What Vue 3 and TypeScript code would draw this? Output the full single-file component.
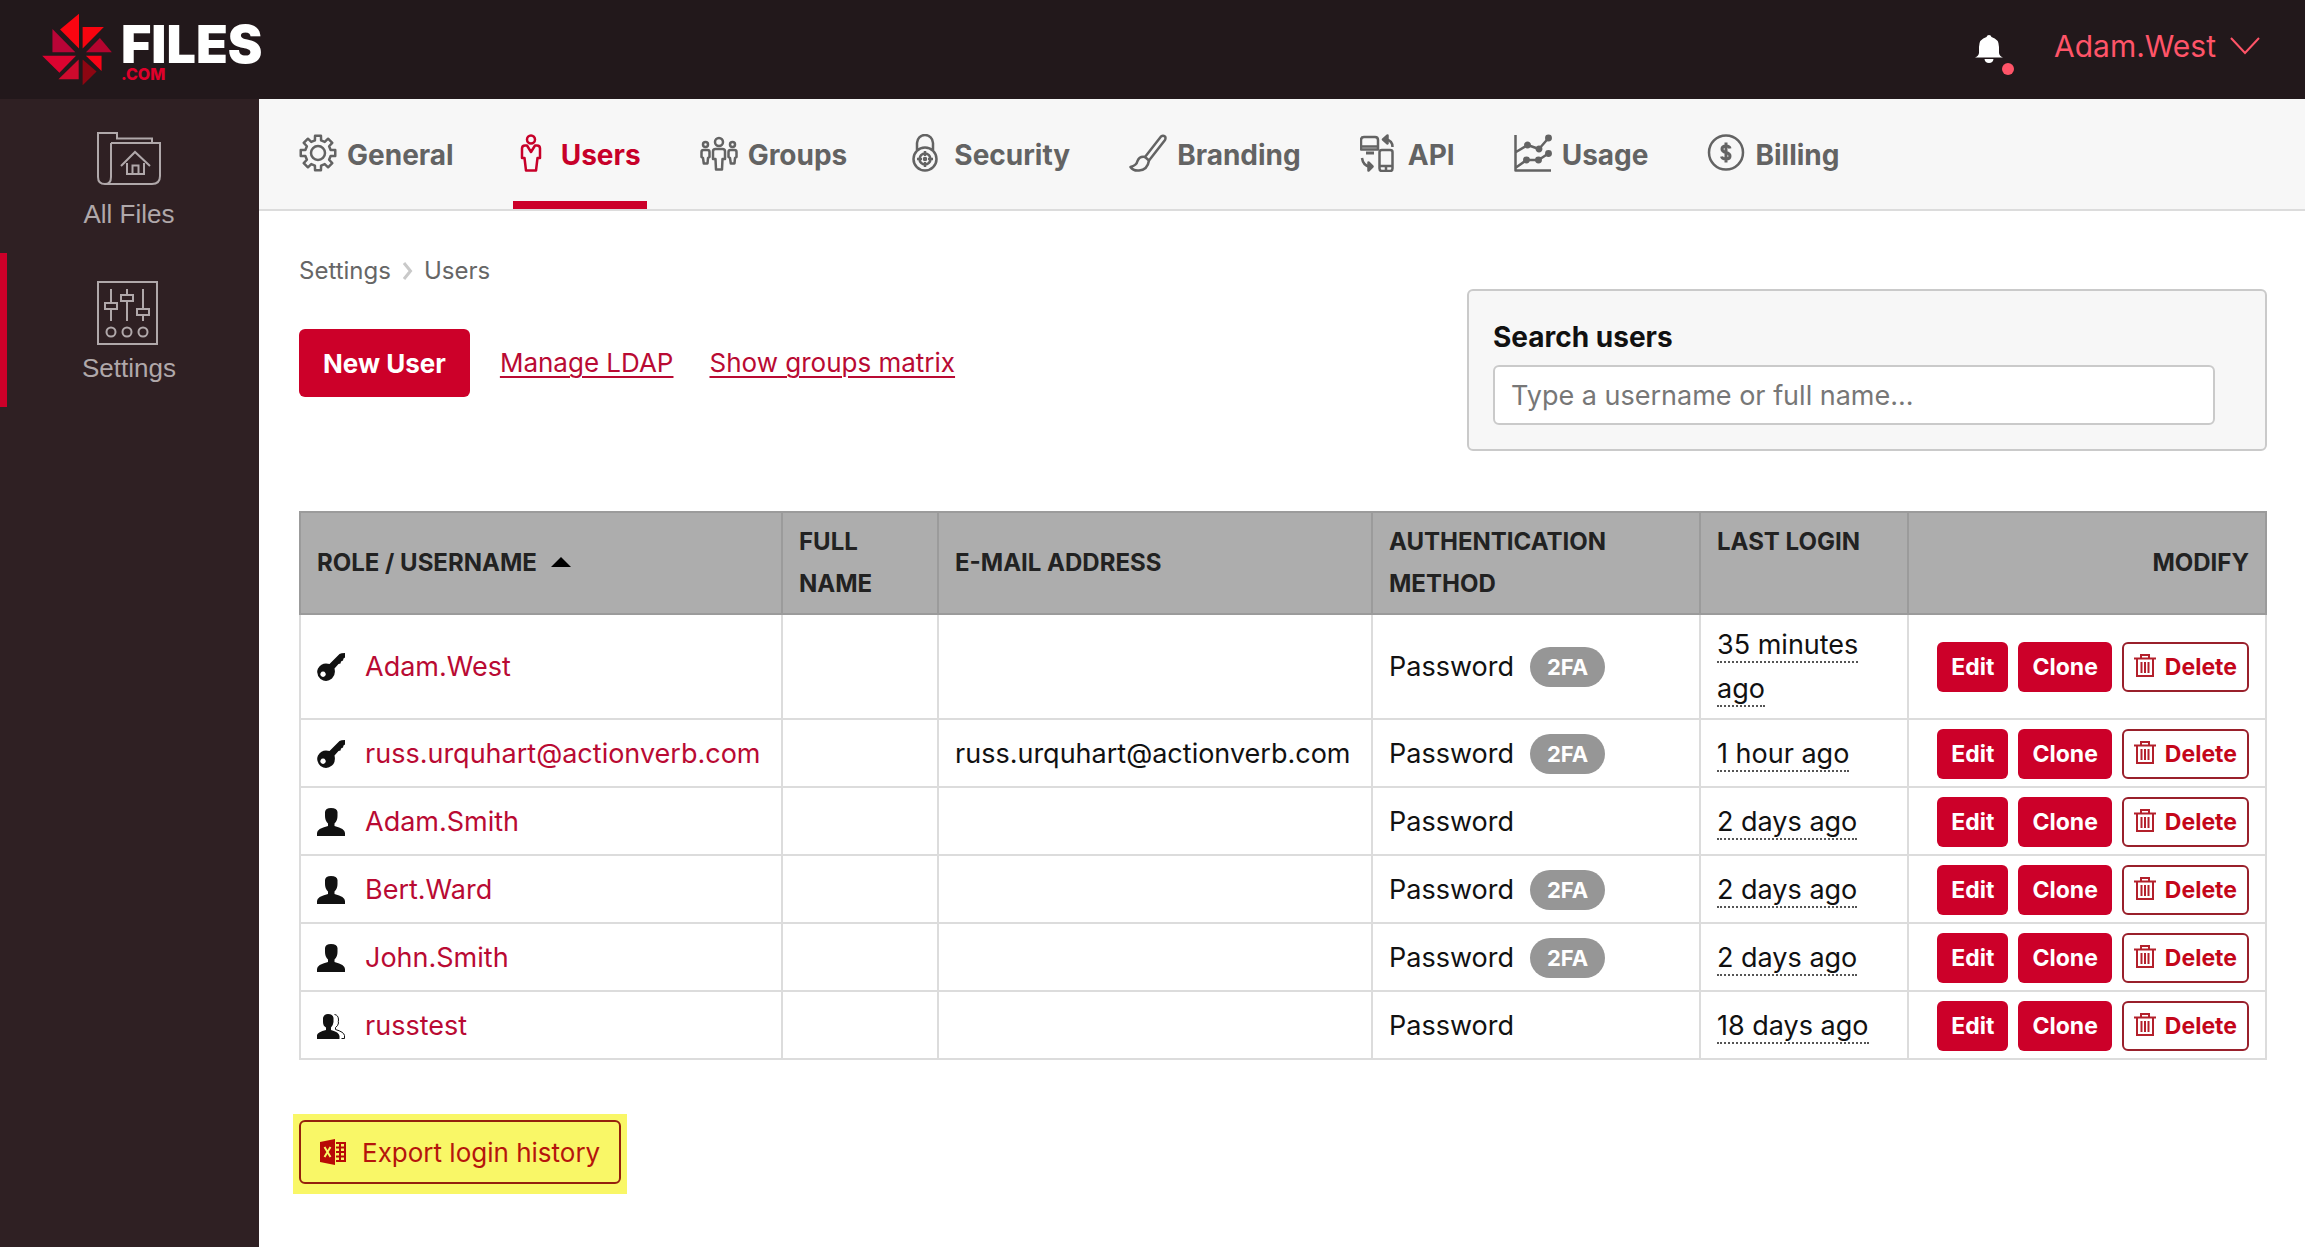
<script setup lang="ts">
import { ref } from 'vue'

interface Shape {
  d: string
  kind?: 'solid' | 'bold'
}
interface Tab {
  label: string
  shapes: Shape[]
}
interface User {
  name: string
  role: 'admin' | 'user' | 'group'
  fullName: string
  email: string
  twoFactor: boolean
  lastLogin: string
}

function circle(cx: number, cy: number, r: number): string {
  return `M${cx - r} ${cy}a${r} ${r} 0 1 0 ${r * 2} 0a${r} ${r} 0 1 0 ${-r * 2} 0Z`
}

function gear(c: number, outer: number, inner: number): string {
  const points: string[] = []
  for (let i = 0; i < 8; i++) {
    const mid = (i * Math.PI) / 4
    const corners: [number, number][] = [
      [inner, -0.24],
      [outer, -0.17],
      [outer, 0.17],
      [inner, 0.24],
    ]
    for (const [r, a] of corners) {
      points.push(`${(c + r * Math.cos(mid + a)).toFixed(2)} ${(c + r * Math.sin(mid + a)).toFixed(2)}`)
    }
  }
  return `M${points.join('L')}Z`
}

const tabs: Tab[] = [
  { label: 'General', shapes: [{ d: gear(19, 17.5, 13) }, { d: circle(19, 19, 7) }] },
  {
    label: 'Users',
    shapes: [
      { d: circle(18, 5.5, 4) },
      { d: 'M14 11.5L18 18L22 11.5H24Q27 11.5 27 14.5V24H24.5L23 36.5H13L11.5 24H9V14.5Q9 11.5 12 11.5Z' },
    ],
  },
  {
    label: 'Groups',
    shapes: [
      { d: circle(19, 8, 4) },
      { d: circle(5.5, 10.5, 2.5) },
      { d: circle(32.5, 10.5, 2.5) },
      { d: 'M15.5 15H22.5Q25 15 25 17.5V25H22.5L22 35.5H16L15.5 25H13V17.5Q13 15 15.5 15Z' },
      { d: 'M3.5 16H7.5Q9.5 16 9.5 18V23L8 24L7.5 29.5H3.8L3 24L1.5 23V18Q1.5 16 3.5 16Z' },
      { d: 'M30.5 16H34.5Q36.5 16 36.5 18V23L35 24L34.5 29.5H30.8L30 24L28.5 23V18Q28.5 16 30.5 16Z' },
    ],
  },
  {
    label: 'Security',
    shapes: [
      { d: circle(19, 25, 11.5) },
      { d: circle(19, 25, 5.5) },
      { d: 'M11 16V9a8 8 0 0 1 16 0V16M19 17V22M19 28V33M11 25H16M22 25H27' },
      { d: circle(19, 25, 1), kind: 'solid' },
    ],
  },
  {
    label: 'Branding',
    shapes: [
      { d: 'M16 23L32 2.5Q34 1 36 2.5Q37 4 36 6L20 26.5Z' },
      { d: 'M16 23Q10.5 22 8.5 27Q7.5 31.5 1.5 33Q4 37 10 36.5Q18.5 36 20 26.5' },
    ],
  },
  {
    label: 'API',
    shapes: [
      { d: 'M4 3H15Q18 3 18 6V15.5H1V6Q1 3 4 3ZM1 12.5H18' },
      { d: 'M6 19H14', kind: 'bold' },
      { d: 'M22 16H30Q32.5 16 32.5 18V34.5Q32.5 37 30 37H22Q19.5 37 19.5 34.5V18Q19.5 16 22 16ZM20 32H32M26 32V36' },
      { d: 'M26 5.5Q32.5 6.5 32.5 13M2 24Q3 31 9 32.5' },
      { d: 'M27.5 1.5L23 5.5L27.5 9.5ZM8.5 28.5L12.5 32.5L8.5 36.5Z', kind: 'solid' },
    ],
  },
  {
    label: 'Usage',
    shapes: [
      { d: 'M1.5 1V36.5H37M2 18L13.5 11L25 15L34.5 4M2 33.5L12.5 26H24.5L34.5 19.5' },
      { d: circle(13.5, 11, 2.2), kind: 'solid' },
      { d: circle(25, 15, 2.2), kind: 'solid' },
      { d: circle(34.5, 4, 2.2), kind: 'solid' },
      { d: circle(12.5, 26, 2.2), kind: 'solid' },
      { d: circle(24.5, 26, 2.2), kind: 'solid' },
      { d: circle(34.5, 19.5, 2.2), kind: 'solid' },
    ],
  },
  {
    label: 'Billing',
    shapes: [
      { d: circle(19, 18.5, 17) },
      {
        d: 'M23 14.5Q22.5 12 19 12Q15 12 15 15Q15 17.5 19 18.5Q23 19.5 23 22Q23 25 19 25Q15 25 14.5 22.5M19 8.5V28.5',
        kind: 'bold',
      },
    ],
  },
]

const activeTab = ref('Users')
const query = ref('')

const users: User[] = [
  { name: 'Adam.West', role: 'admin', fullName: '', email: '', twoFactor: true, lastLogin: '35 minutes ago' },
  { name: 'russ.urquhart@actionverb.com', role: 'admin', fullName: '', email: 'russ.urquhart@actionverb.com', twoFactor: true, lastLogin: '1 hour ago' },
  { name: 'Adam.Smith', role: 'user', fullName: '', email: '', twoFactor: false, lastLogin: '2 days ago' },
  { name: 'Bert.Ward', role: 'user', fullName: '', email: '', twoFactor: true, lastLogin: '2 days ago' },
  { name: 'John.Smith', role: 'user', fullName: '', email: '', twoFactor: true, lastLogin: '2 days ago' },
  { name: 'russtest', role: 'group', fullName: '', email: '', twoFactor: false, lastLogin: '18 days ago' },
]
</script>

<template>
  <div class="app">
    <header class="topbar">
      <a class="logo" href="#" aria-label="Files.com home">
        <svg class="logo-mark" viewBox="126 38 210 220" aria-hidden="true">
          <path fill="#fb0511" d="M237 40V145L180 88Z" />
          <path fill="#f8040f" d="M248 80H312L248 145Z" />
          <path fill="#b4042f" d="M300 113L336 156H258Z" />
          <path fill="#b90437" d="M157 86L226 156H157Z" />
          <path fill="#dc0330" d="M126 167H228L178 218Z" />
          <path fill="#cd0a2d" d="M236 178V238H175Z" />
          <path fill="#8d0612" d="M248 178L290 214L248 256Z" />
          <path fill="#fa0316" d="M258 167H305V213Z" />
        </svg>
        <span class="logo-text">
          <span class="logo-name">FILES</span>
          <span class="logo-tld">.COM</span>
        </span>
      </a>
      <div class="account">
        <button class="bell" type="button" aria-label="Notifications">
          <svg viewBox="0 0 30 28" width="30" height="28" aria-hidden="true">
            <path fill="#fff" d="M15 0Q17 0 17.5 2Q25 4 25 12V18Q25.5 21 29 22.5H1Q4.5 21 5 18V12Q5 4 12.5 2Q13 0 15 0ZM10.5 24H19.5Q19 28 15 28Q11 28 10.5 24Z" />
          </svg>
          <span class="dot"></span>
        </button>
        <button class="user-menu" type="button">
          <span>Adam.West</span>
          <svg viewBox="0 0 30 18" width="30" height="18" aria-hidden="true">
            <path fill="none" stroke="currentColor" stroke-width="2" d="M1 1L15 16L29 1" />
          </svg>
        </button>
      </div>
    </header>

    <div class="body">
      <nav class="sidebar" aria-label="Main">
        <a class="side-item" href="#">
          <svg viewBox="0 0 64 64" aria-hidden="true">
            <path d="M14 16V50Q14 57 8 57Q1 57 1 50V6H20V11.5H55V16M14 16H63V49Q63 57 55 57H8" />
            <path d="M24 39L38 25L53 39M30 36V47H47V36M35.5 47V38.5H41.5V47" />
          </svg>
          <span>All Files</span>
        </a>
        <a class="side-item active" href="#">
          <svg viewBox="0 0 64 64" aria-hidden="true">
            <path d="M1 1H60V63H1ZM14 8V22M14 28V40M30 8V14M30 20V40M46 8V28M46 34V40" />
            <path d="M8 22H20V28H8ZM24 14H36V20H24ZM40 28H52V34H40Z" />
            <circle cx="14" cy="51" r="4.5" />
            <circle cx="30" cy="51" r="4.5" />
            <circle cx="46" cy="51" r="4.5" />
          </svg>
          <span>Settings</span>
        </a>
      </nav>

      <div class="main">
        <nav class="tabs" aria-label="Settings sections">
          <a
            v-for="tab in tabs"
            :key="tab.label"
            href="#"
            class="tab"
            :class="{ active: tab.label === activeTab }"
            @click.prevent="activeTab = tab.label"
          >
            <svg viewBox="0 0 38 38" aria-hidden="true">
              <path v-for="shape in tab.shapes" :key="shape.d" :d="shape.d" :class="shape.kind" />
            </svg>
            <span>{{ tab.label }}</span>
          </a>
        </nav>

        <main class="content">
          <nav class="crumbs" aria-label="Breadcrumb">
            <a href="#">Settings</a>
            <svg viewBox="0 0 11 18" width="11" height="18" aria-hidden="true">
              <path fill="none" stroke="#c9c9c9" stroke-width="3" d="M2 1L8.5 9L2 17" />
            </svg>
            <span>Users</span>
          </nav>

          <div class="toolbar">
            <div class="actions">
              <button class="btn-primary" type="button">New User</button>
              <a href="#">Manage LDAP</a>
              <a href="#">Show groups matrix</a>
            </div>
            <form class="search" @submit.prevent>
              <label for="user-search">Search users</label>
              <input id="user-search" v-model="query" type="text" placeholder="Type a username or full name..." />
            </form>
          </div>

          <table class="users">
            <colgroup>
              <col class="c-name" />
              <col class="c-full" />
              <col />
              <col class="c-auth" />
              <col class="c-login" />
              <col class="c-modify" />
            </colgroup>
            <thead>
              <tr>
                <th scope="col">
                  ROLE / USERNAME
                  <svg class="sort" viewBox="0 0 20 10" width="20" height="10" aria-hidden="true">
                    <path d="M10 0L20 10H0Z" />
                  </svg>
                </th>
                <th scope="col">FULL NAME</th>
                <th scope="col">E-MAIL ADDRESS</th>
                <th scope="col">AUTHENTICATION METHOD</th>
                <th scope="col" class="top">LAST LOGIN</th>
                <th scope="col" class="right">MODIFY</th>
              </tr>
            </thead>
            <tbody>
              <tr v-for="user in users" :key="user.name">
                <td>
                  <div class="who">
                    <svg viewBox="0 0 28 28" aria-hidden="true">
                      <path
                        v-if="user.role === 'admin'"
                        fill-rule="evenodd"
                        d="M9 10.5Q11 10.5 12.5 11L22.5 1Q24 0 28 0V4.5L26.5 5.5L26 7.5L24 8.5L23.5 10.5L21.5 11L17.5 15.5Q19 22 15 25.5Q9.5 30 3.5 26Q-1.5 21 1 15.5Q4 10.5 9 10.5ZM6 18.5a2.7 2.7 0 1 0 .1 0Z"
                      />
                      <path
                        v-else-if="user.role === 'user'"
                        d="M8 4Q8.5 0 14 0Q20 0 20.5 4V8Q20.5 13 17.5 15.5V18Q28 20.5 28 25V28H0V25Q0 20.5 11 18V15.5Q8 13 8 8Z"
                      />
                      <template v-else>
                        <path d="M6 6Q7 2 11 2Q16 2 16.5 6V10Q16 14 14 15.5V18Q22 20 22.5 24V27H0V23Q1 20 9 18V15.5Q6 14 6 10Z" />
                        <path
                          fill="none"
                          stroke="#111"
                          d="M17.5 2.5Q21.5 3 21.5 8Q21 10 21.5 11Q21 14 18.5 15.5V17.5Q27 20 27.5 23.5V26.5H24.5"
                        />
                      </template>
                    </svg>
                    <a href="#">{{ user.name }}</a>
                  </div>
                </td>
                <td>{{ user.fullName }}</td>
                <td>{{ user.email }}</td>
                <td>
                  <div class="auth">
                    <span>Password</span>
                    <span v-if="user.twoFactor" class="pill">2FA</span>
                  </div>
                </td>
                <td><span class="when">{{ user.lastLogin }}</span></td>
                <td>
                  <div class="modify">
                    <button type="button" class="btn-small">Edit</button>
                    <button type="button" class="btn-small">Clone</button>
                    <button type="button" class="btn-small outline">
                      <svg viewBox="0 0 22 26" width="22" height="26" aria-hidden="true">
                        <path d="M0 4.5H22M7 4V1H15V4M3 5V22H19V5M7.5 8V19M11 8V19M14.5 8V19" />
                      </svg>
                      <span>Delete</span>
                    </button>
                  </div>
                </td>
              </tr>
            </tbody>
          </table>

          <div class="highlight">
            <button class="export" type="button">
              <svg viewBox="0 0 26 26" width="26" height="26" aria-hidden="true">
                <path fill="#b80a06" d="M0 3L15 0V26L0 23Z" />
                <path fill="none" stroke="#f9f767" stroke-width="2" d="M4.5 8L10.5 18M10.5 8L4.5 18" />
                <path fill="none" stroke="#b80a06" stroke-width="2" d="M16 4H25V22H16M16 8.5H25M16 13H25M16 17.5H25M20 4V22" />
              </svg>
              <span>Export login history</span>
            </button>
          </div>
        </main>
      </div>
    </div>
  </div>
</template>

<style>
body {
  margin: 0;
}
</style>

<style scoped>
.app {
  min-height: 100vh;
  display: flex;
  flex-direction: column;
  font-family: Inter, "Liberation Sans", sans-serif;
  font-size: 27px;
  line-height: 44px;
  color: #111;
  background: #fff;
}
button,
input {
  font-family: inherit;
  box-sizing: border-box;
}
button {
  cursor: pointer;
}
.topbar {
  height: 99px;
  display: flex;
  align-items: center;
  justify-content: space-between;
  padding: 0 45px 0 42px;
  background: #22181b;
}
.logo {
  display: flex;
  gap: 9px;
  text-decoration: none;
}
.logo-mark {
  width: 70px;
  height: 73px;
}
.logo-text {
  display: flex;
  flex-direction: column;
  padding-top: 12px;
}
.logo-name {
  font-size: 52px;
  line-height: 40px;
  font-weight: 900;
  color: #fff;
}
.logo-tld {
  font-size: 16px;
  line-height: 18px;
  font-weight: 800;
  color: #e0002b;
}
.account {
  display: flex;
  align-items: center;
  gap: 50px;
}
.bell {
  position: relative;
  display: flex;
  padding: 0 0 2px;
  border: 0;
  background: none;
}
.dot {
  position: absolute;
  right: -10px;
  bottom: -10px;
  width: 12px;
  height: 12px;
  border-radius: 50%;
  background: #ff5468;
}
.user-menu {
  display: flex;
  align-items: center;
  gap: 14px;
  padding: 0 0 8px;
  border: 0;
  background: none;
  color: #ff5468;
  font-size: 30px;
  line-height: 40px;
}
.body {
  flex: 1;
  display: flex;
}
.sidebar {
  width: 259px;
  flex: none;
  background: #2f2023;
}
.side-item {
  height: 154px;
  box-sizing: border-box;
  padding: 28px 8px 0 0;
  border-left: 7px solid transparent;
  display: flex;
  flex-direction: column;
  align-items: center;
  gap: 7px;
  color: #b0a8aa;
  font-family: "Liberation Sans", Arial, sans-serif;
  font-size: 26px;
  line-height: 32px;
  text-decoration: none;
}
.side-item.active {
  border-left-color: #cc0029;
}
.side-item svg {
  width: 64px;
  height: 64px;
  fill: none;
  stroke: currentColor;
  stroke-width: 2;
}
.main {
  flex: 1;
  min-width: 0;
}
.tabs {
  height: 110px;
  display: flex;
  gap: 53px;
  padding-left: 40px;
  background: #f7f7f7;
  border-bottom: 2px solid #dcdcdc;
}
.tab {
  box-sizing: border-box;
  height: 110px;
  display: flex;
  align-items: center;
  gap: 10px;
  padding: 6px 6px 0 0;
  border-bottom: 8px solid transparent;
  color: #636363;
  font-size: 28px;
  font-weight: 700;
  text-decoration: none;
}
.tab.active {
  color: #c70029;
  border-bottom-color: #cc0029;
}
.tab span {
  padding-top: 3px;
}
.tab svg {
  width: 38px;
  height: 38px;
  fill: none;
  stroke: currentColor;
  stroke-width: 2.5;
  stroke-linejoin: round;
}
.tab .solid {
  fill: currentColor;
}
.tab .bold {
  stroke-width: 3;
}
.content {
  padding: 38px 38px 52px 40px;
}
.crumbs {
  display: flex;
  align-items: center;
  gap: 11px;
  font-size: 24px;
  color: #666;
}
.crumbs a {
  color: inherit;
  text-decoration: none;
}
.toolbar {
  display: flex;
  justify-content: space-between;
  align-items: flex-start;
}
.actions {
  display: flex;
  align-items: center;
  gap: 36px;
  margin-top: 36px;
  font-size: 26px;
}
.actions a {
  color: #b90a33;
  text-underline-offset: 4px;
  text-decoration-thickness: 2px;
}
.btn-primary {
  height: 68px;
  margin-right: -6px;
  padding: 0 24px;
  border: 0;
  border-radius: 6px;
  background: #cc0029;
  color: #fff;
  font-size: 26px;
  font-weight: 700;
}
.search {
  box-sizing: border-box;
  width: 800px;
  margin-top: -4px;
  padding: 24px 50px 24px 24px;
  border: 2px solid #cacaca;
  border-radius: 6px;
  background: #f7f7f7;
}
.search label {
  display: block;
  margin-bottom: 6px;
  font-size: 28px;
  font-weight: 700;
}
.search input {
  display: block;
  width: 100%;
  height: 60px;
  padding: 0 16px;
  border: 2px solid #cacaca;
  border-radius: 6px;
  background: #fff;
  color: #111;
  font-size: 27px;
}
.search input::placeholder {
  color: #777;
  opacity: 1;
}
.users {
  width: 100%;
  margin-top: 60px;
  table-layout: fixed;
  border-collapse: collapse;
}
.c-name {
  width: 482px;
}
.c-full {
  width: 156px;
}
.c-auth {
  width: 328px;
}
.c-login {
  width: 208px;
}
.c-modify {
  width: 358px;
}
.users th {
  padding: 8px 16px;
  border: 2px solid #9b9b9b;
  background: #adadad;
  color: #222;
  font-size: 24px;
  line-height: 42px;
  font-weight: 700;
  text-align: left;
}
.users th.top {
  vertical-align: top;
}
.users th.right {
  text-align: right;
}
.sort {
  margin: 0 0 4px 8px;
  vertical-align: baseline;
}
.users td {
  height: 51px;
  padding: 8px 16px 7px;
  border: 2px solid #dcdcdc;
}
.who {
  display: flex;
  align-items: center;
  gap: 20px;
}
.who svg {
  width: 28px;
  height: 28px;
  flex: none;
  fill: #111;
}
.who a {
  color: #b90a33;
  text-decoration: none;
}
.auth {
  display: flex;
  align-items: center;
  gap: 16px;
}
.pill {
  padding: 0 17px;
  border-radius: 20px;
  background: #969696;
  color: #fff;
  font-size: 22px;
  line-height: 40px;
  font-weight: 700;
}
.when {
  border-bottom: 2px dotted #555;
}
.modify {
  display: flex;
  justify-content: flex-end;
  gap: 10px;
}
.btn-small {
  height: 50px;
  display: flex;
  align-items: center;
  gap: 9px;
  padding: 0 14px;
  border: 0;
  border-radius: 6px;
  background: #cc0029;
  color: #fff;
  font-size: 23px;
  font-weight: 700;
}
.btn-small.outline {
  padding: 0 10px;
  border: 2px solid #99202b;
  background: #fff;
  color: #c4061a;
}
.btn-small svg {
  fill: none;
  stroke: #b3202b;
  stroke-width: 2;
}
.highlight {
  width: fit-content;
  margin: 54px 0 0 -6px;
  padding: 6px 6px 10px;
  background: #f9f767;
}
.export {
  height: 64px;
  display: flex;
  align-items: center;
  gap: 16px;
  padding: 0 19px;
  border: 2px solid #94200c;
  border-radius: 6px;
  background: transparent;
  color: #b5150c;
  font-size: 26px;
}
</style>
